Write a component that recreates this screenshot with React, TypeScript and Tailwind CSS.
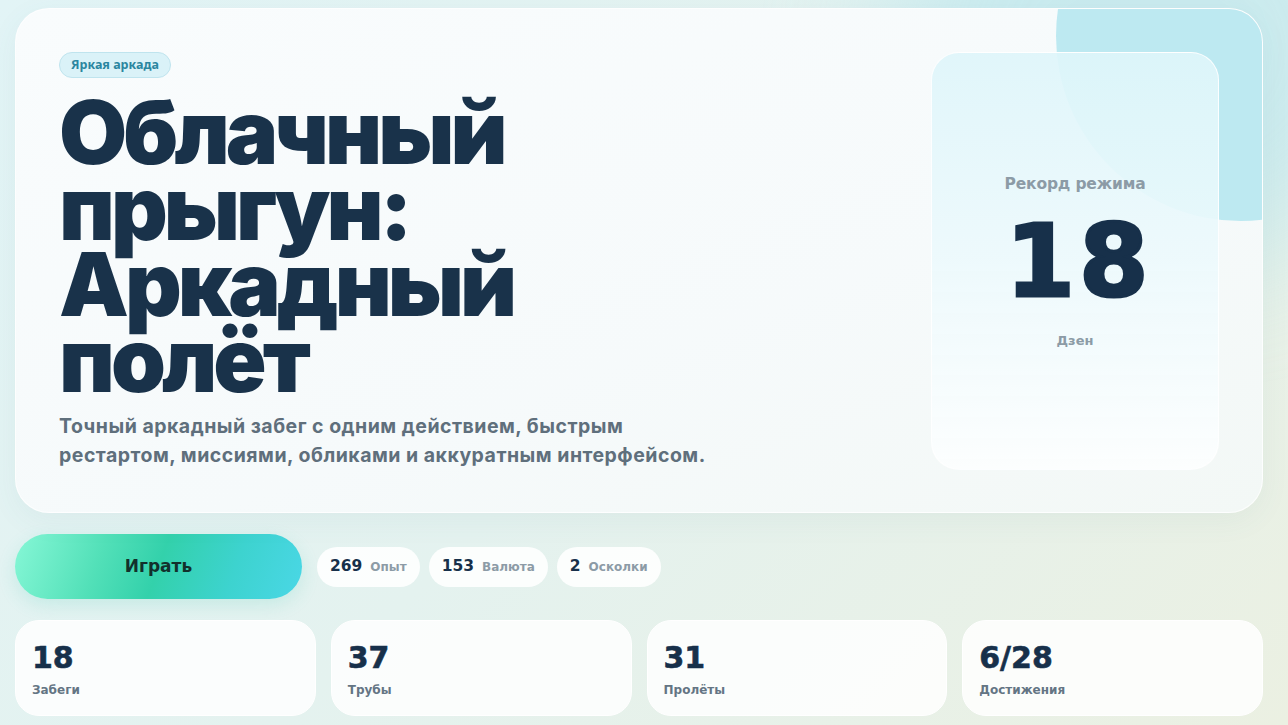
import React from 'react';

const CHIPS = [
  { value: '269', label: 'Опыт' },
  { value: '153', label: 'Валюта' },
  { value: '2', label: 'Осколки' },
];

const STATS = [
  { value: '18', label: 'Забеги' },
  { value: '37', label: 'Трубы' },
  { value: '31', label: 'Пролёты' },
  { value: '6/28', label: 'Достижения' },
];

export default function App() {
  return (
    <div className="min-h-[725px] w-full bg-[linear-gradient(135deg,#e2f4f6_0%,#e4f2ef_50%,#ebf0e2_100%)] relative overflow-hidden">
      <div className="absolute right-[-120px] top-[-160px] w-[520px] h-[420px] rounded-full bg-[#bfe8ef] blur-[60px] opacity-70" />
      <div className="relative w-[1248px] ml-[15px] flex flex-col gap-[21px] pt-[8px]">
        {/* hero */}
        <section className="relative h-[505px] rounded-[34px] border border-white/80 bg-[linear-gradient(160deg,#f9fcfd_0%,#f6fafb_60%,#f3f8f6_100%)] overflow-hidden flex items-start justify-between pl-[43px] pr-[43px] pt-[43px] shadow-[0_8px_30px_rgba(60,120,130,0.06)]">
          <div className="absolute left-[1040px] top-[-158px] w-[370px] h-[370px] rounded-full bg-[#bde9f1]" />
          <div className="relative flex flex-col items-start">
            <span className="px-[11px] h-[26px] flex items-center rounded-full bg-[#daf2f8] border border-[#bfe4ee] text-[12.5px] font-bold text-[#2b86a0] font-['Noto_Sans',sans-serif]">
              Яркая аркада
            </span>
            <h1 className="mt-[16px] text-[#19324a] font-['Inter',sans-serif] font-black text-[88px] leading-[76px] tracking-[-0.045em] w-[540px]">
              Облачный прыгун: Аркадный полёт
            </h1>
            <p className="mt-[14px] text-[#5f6f7c] font-['Inter',sans-serif] font-bold text-[19.5px] leading-[29px] tracking-[0.025em] w-[720px]">
              Точный аркадный забег с одним действием, быстрым
              <br />
              рестартом, миссиями, обликами и аккуратным интерфейсом.
            </p>
          </div>
          <div className="relative w-[288px] h-[418px] rounded-[28px] border border-white/90 bg-[linear-gradient(180deg,rgba(222,245,250,0.92)_0%,rgba(236,249,252,0.92)_50%,rgba(252,254,254,0.96)_100%)] flex flex-col items-center pt-[120px]">
            <div className="text-[15.5px] font-bold text-[#8c9ba6] font-['DejaVu_Sans',sans-serif] tracking-[-0.01em]">Рекорд режима</div>
            <div className="mt-[18px] ml-[8px] text-[100px] leading-[96px] font-black text-[#17304a] font-['DejaVu_Sans',sans-serif] tracking-[0.04em] [-webkit-text-stroke:3px_#17304a]">18</div>
            <div className="mt-[21px] text-[13px] font-bold text-[#8c9ba6] font-['DejaVu_Sans',sans-serif]">Дзен</div>
          </div>
        </section>

        {/* actions */}
        <div className="flex items-center gap-[9px]">
          <button className="w-[287px] h-[65px] mr-[6px] rounded-full bg-[linear-gradient(110deg,#86f7d6_0%,#52e0b8_30%,#33d1ab_50%,#3dd3cf_75%,#4ad7e6_100%)] text-[17px] font-bold text-[#12302c] font-['DejaVu_Sans',sans-serif] shadow-[0_6px_18px_rgba(60,200,180,0.18)]">
            Играть
          </button>
          {CHIPS.map((c) => (
            <div key={c.label} className="h-[40px] px-[13px] rounded-full bg-white/90 flex items-center gap-[8px] font-['DejaVu_Sans',sans-serif]">
              <span className="text-[15.5px] font-bold text-[#17304a]">{c.value}</span>
              <span className="text-[12px] font-bold text-[#8c9ba6]">{c.label}</span>
            </div>
          ))}
        </div>

        {/* stats */}
        <div className="grid grid-cols-4 gap-[15px]">
          {STATS.map((s) => (
            <div key={s.label} className="h-[96px] rounded-[24px] bg-white/85 border border-white pl-[16px] pt-[20px] font-['DejaVu_Sans',sans-serif]">
              <div className="text-[30px] leading-[34px] font-bold text-[#17304a] [-webkit-text-stroke:0.6px_#17304a]">{s.value}</div>
              <div className="mt-[6px] text-[12px] font-bold text-[#647584]">{s.label}</div>
            </div>
          ))}
        </div>
      </div>
    </div>
  );
}
